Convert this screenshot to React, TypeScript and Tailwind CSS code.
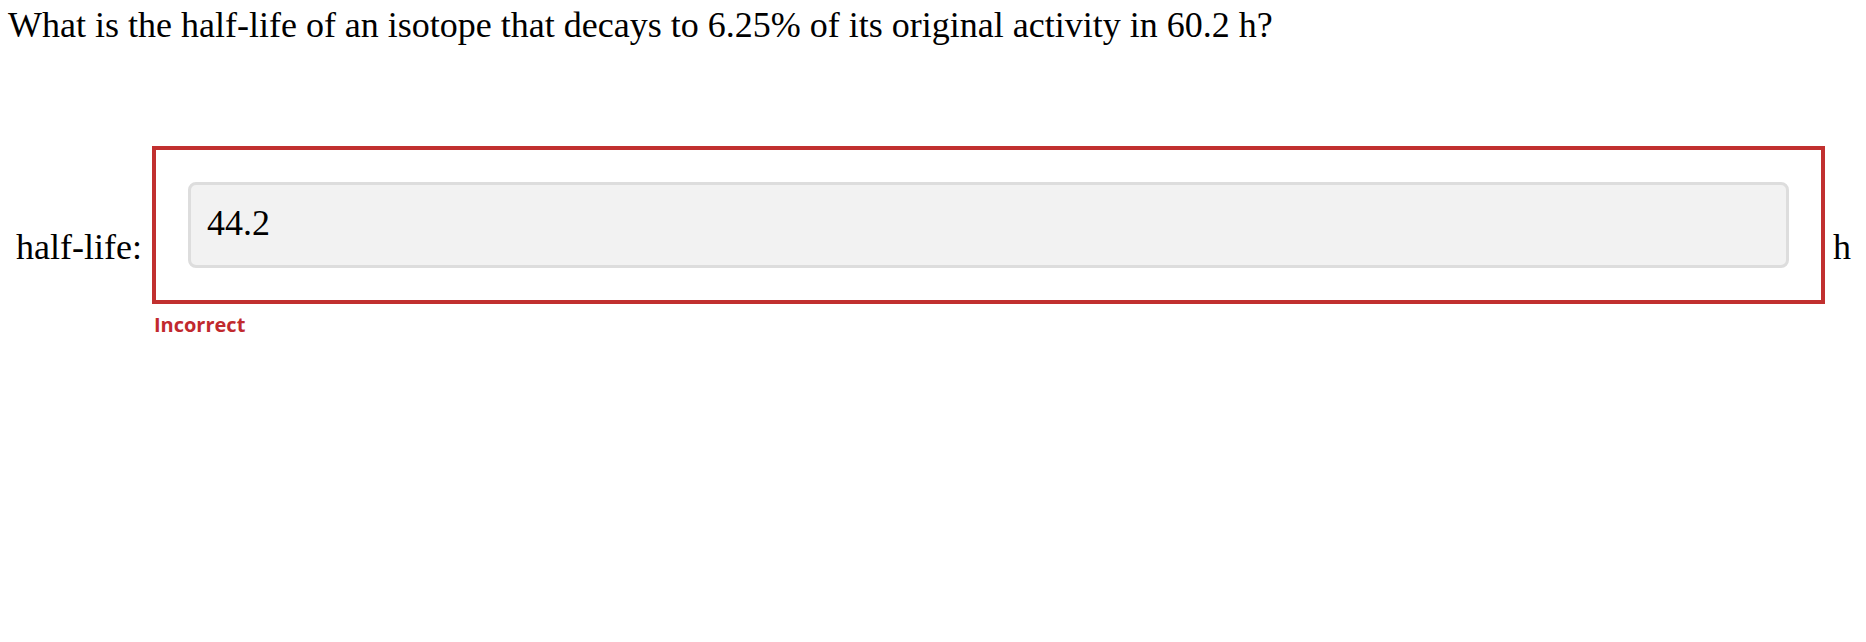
import React from "react";

const App: React.FC = () => {
  return (
    <div className="w-full h-[642px] bg-white text-black font-['Liberation_Serif','Times_New_Roman',serif]">
      <div className="pl-[8px] pt-[4px] text-[36px] leading-[normal]">
        What is the half-life of an isotope that decays to 6.25% of its original activity in 60.2 h?
      </div>
      <div className="flex items-start mt-[100px] pl-[16px] pr-[15px]">
        <div className="pt-[80px] text-[36px] leading-[normal] whitespace-nowrap">half-life:</div>
        <div className="flex flex-col ml-[10px] flex-1">
          <div className="border-4 border-[#c1302f] p-[32px]">
            <input
              type="text"
              readOnly
              value="44.2"
              className="w-full h-[86px] px-[16px] pb-[5px] rounded-[8px] border-[3px] border-[#dddddd] bg-[#f2f2f2] text-[36px] leading-[normal] text-black outline-none font-['Liberation_Serif','Times_New_Roman',serif]"
            />
          </div>
          <div className="mt-[7px] ml-[2px] text-[20px] leading-[normal] font-bold text-[#c1292e] font-['Open_Sans','Noto_Sans',sans-serif]">
            Incorrect
          </div>
        </div>
        <div className="pt-[80px] ml-[8px] text-[36px] leading-[normal]">h</div>
      </div>
    </div>
  );
};

export default App;
